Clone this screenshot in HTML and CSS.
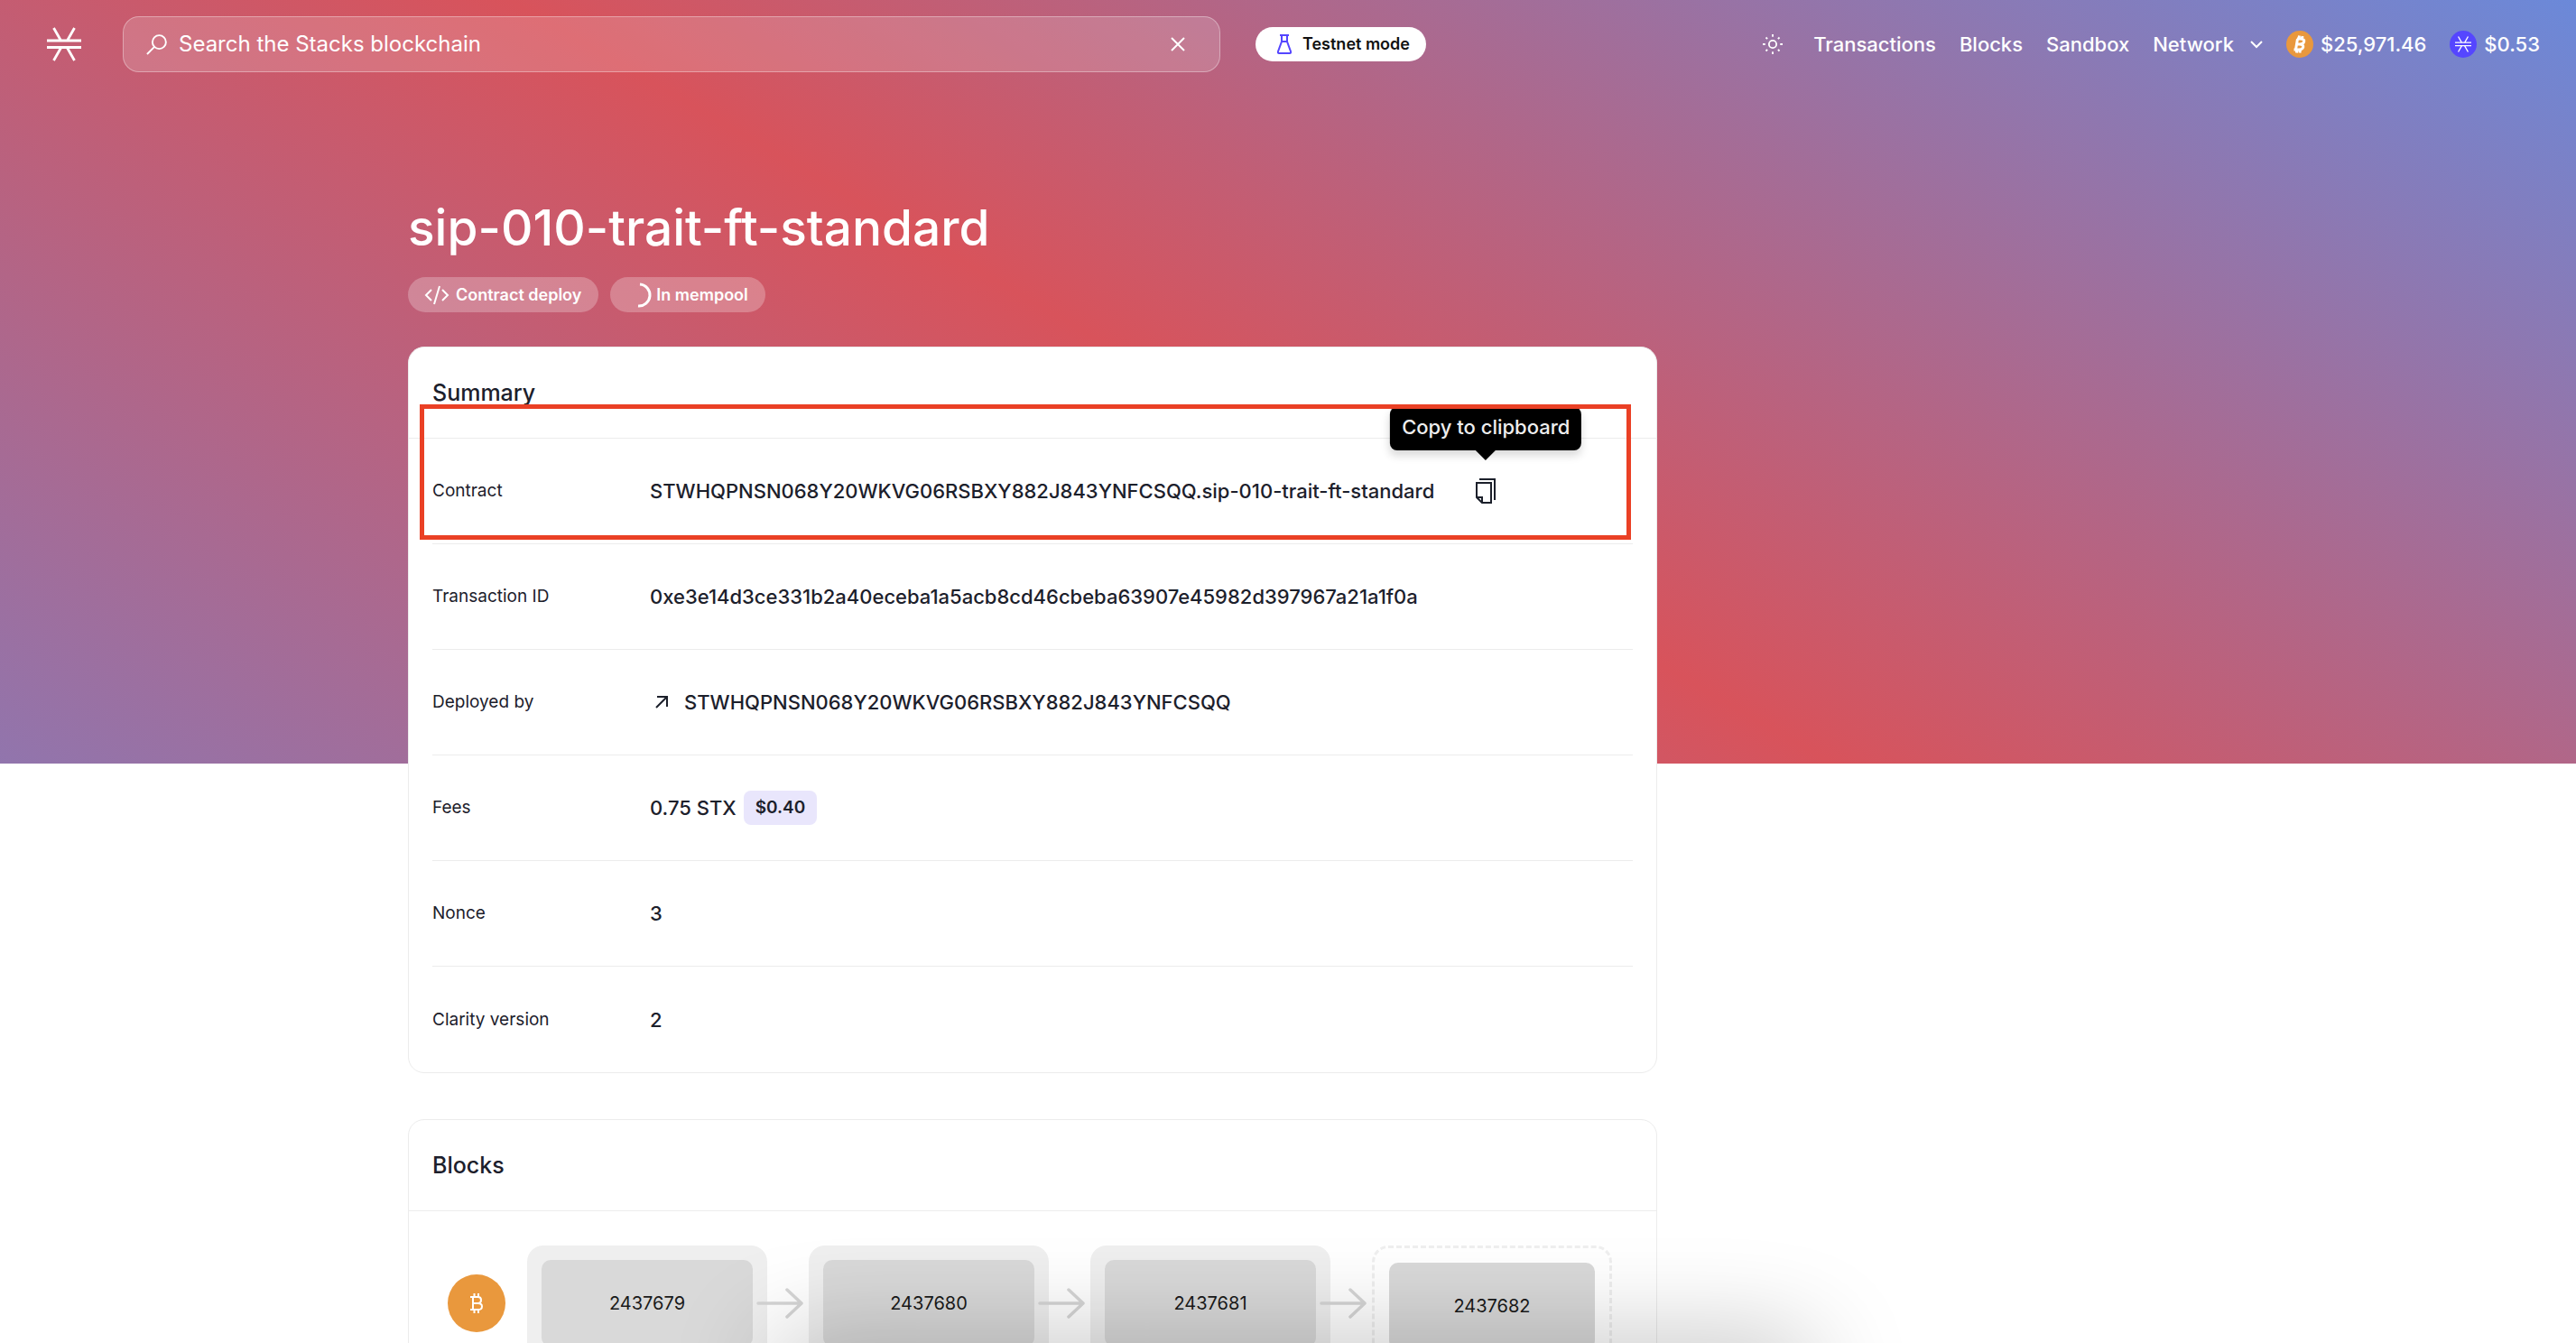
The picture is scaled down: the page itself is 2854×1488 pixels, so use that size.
FILE: index.html
```html
<!DOCTYPE html>
<html lang="en">
<head>
<meta charset="utf-8">
<title>sip-010-trait-ft-standard</title>
<link rel="stylesheet" href="styles.css">
</head>
<body>
<svg class="sprite" aria-hidden="true">
  <symbol id="stx" viewBox="0 0 38 38">
    <path d="M0 15h38M0 22.500h38M7.500 1l8 14M30.500 1l-8 14M7.500 37l8-14M30.500 37l-8-14" fill="none" stroke="currentColor" stroke-width="2.800"/>
  </symbol>
  <symbol id="arrow" viewBox="0 0 52 34">
    <path d="M2 17h47M34 2l16 15-16 15" fill="none" stroke="currentColor" stroke-width="3.500" stroke-linecap="round" stroke-linejoin="round"/>
  </symbol>
</svg>
<div class="hero">
  <header class="topbar">
    <a class="logo" href="#" aria-label="Home"><svg><use href="#stx"/></svg></a>
    <form class="search" role="search">
      <svg class="search-icon" viewBox="0 0 24 24"><circle cx="15" cy="9" r="7.8"/><path d="M9.5 14.5L1 23"/></svg>
      <input class="search-input" type="text" aria-label="Search" placeholder="Search the Stacks blockchain">
      <button class="clear" type="button" aria-label="Clear search"><svg viewBox="0 0 16 16"><path d="M1 1l14 14M15 1L1 15"/></svg></button>
    </form>
    <button class="mode" type="button">
      <svg viewBox="0 0 16 22"><path d="M3 1h10M5 1v7L1 19q-.4 2 1 2h12q1.400 0 1-2L11 8V1M5 8h6"/></svg>
      Testnet mode
    </button>
    <nav class="nav">
      <button class="theme" type="button" aria-label="Change theme"><svg viewBox="0 0 24 24"><circle cx="12" cy="12" r="4.500"/><path d="M12 0v3M12 21v3M0 12h3M21 12h3M3.800 3.800l1.800 1.800M18.400 18.400l1.800 1.800M3.800 20.200l1.800-1.800M18.400 5.600l1.800-1.800"/></svg></button>
      <a href="#">Transactions</a>
      <a href="#">Blocks</a>
      <a href="#">Sandbox</a>
      <a class="network" href="#">Network <svg viewBox="0 0 14 8"><path d="M1 1l6 6 6-6"/></svg></a>
      <span class="price"><span class="coin btc"><svg viewBox="0 0 16 20"><path d="M5 4h4q4.500 .4 3.700 3.200T8 10H5M8 10q4.500 .6 3.700 3.400T6 16H1.500M5.500 4L3.500 16M7.500 0.500l-.6 3.500M11 1l-.6 3.500M5 16l-.6 3.500M8.500 16l-.6 3.500"/></svg></span>$25,971.46</span>
      <span class="price"><span class="coin stx"><svg><use href="#stx"/></svg></span>$0.53</span>
    </nav>
  </header>
</div>
<main class="content">
  <div class="column">
    <h1>sip-010-trait-ft-standard</h1>
    <div class="tags">
      <span class="tag"><svg class="code" viewBox="0 0 26 22"><path d="M7 5l-6 6 6 6M19 5l6 6-6 6M16 1l-6 20"/></svg>Contract deploy</span>
      <span class="tag pending"><svg class="spinner" viewBox="0 0 26 26"><path d="M14 1a12 12 0 0 1-2 24"/></svg>In mempool</span>
    </div>
    <section class="card">
      <h2>Summary</h2>
      <dl class="rows">
        <div class="row marked"><dt>Contract</dt><dd>STWHQPNSN068Y20WKVG06RSBXY882J843YNFCSQQ.sip-010-trait-ft-standard
          <button class="copy" type="button" aria-label="Copy to clipboard"><svg viewBox="0 0 22 28"><path d="M4 1h17v23M1 5h16v22H7l-6-6zM1 21h6v6"/></svg><span class="tooltip">Copy to clipboard</span></button></dd></div>
        <div class="row"><dt>Transaction ID</dt><dd>0xe3e14d3ce331b2a40eceba1a5acb8cd46cbeba63907e45982d397967a21a1f0a</dd></div>
        <div class="row"><dt>Deployed by</dt><dd><svg class="out" viewBox="0 0 14 14"><path d="M1 13L13 1M2 1h11v11"/></svg><a href="#">STWHQPNSN068Y20WKVG06RSBXY882J843YNFCSQQ</a></dd></div>
        <div class="row"><dt>Fees</dt><dd>0.75 STX <span class="usd">$0.40</span></dd></div>
        <div class="row"><dt>Nonce</dt><dd>3</dd></div>
        <div class="row"><dt>Clarity version</dt><dd>2</dd></div>
      </dl>
    </section>
    <section class="card">
      <h2>Blocks</h2>
      <div class="chain">
        <span class="btc-big"><svg viewBox="0 0 14 22"><path d="M0 4h8.500q3.500 0 3.500 3.400T8.500 11H3M8.500 11q4.500 0 4.500 3.600T8.500 18H0M3 4v14M4.500 0v4M9 0v4M4.500 18v4M9 18v4"/></svg></span>
        <div class="blocks">
          <div class="block"><span>2437679</span></div>
          <svg class="arrow"><use href="#arrow"/></svg>
          <div class="block"><span>2437680</span></div>
          <svg class="arrow"><use href="#arrow"/></svg>
          <div class="block"><span>2437681</span></div>
          <svg class="arrow"><use href="#arrow"/></svg>
          <div class="block next"><span>2437682</span></div>
        </div>
      </div>
    </section>
  </div>
</main>
<div class="shade"></div>
</body>
</html>
```
FILE: styles.css
```css
* { box-sizing: border-box; }
html { height: 100%; }
body {
  margin: 0;
  height: 100%;
  overflow: hidden;
  position: relative;
  background: #fff;
  color: #1c202b;
  font: 500 22px/32px Inter, "Liberation Sans", sans-serif;
}
svg { display: block; fill: none; stroke: currentColor; stroke-width: 2; overflow: visible; }
button { border: 0; padding: 0; background: none; color: inherit; font: inherit; }
a { color: inherit; text-decoration: none; }
.sprite { position: absolute; width: 0; height: 0; }

.hero {
  height: 846px;
  margin-bottom: -646px;
  background: linear-gradient(30deg, #9175ad 0%, #d8535b 47%, #6b89d9 100%);
  color: #fff;
}
.topbar { display: flex; align-items: center; height: 98px; padding: 0 40px 0 52px; }
.logo { width: 38px; height: 38px; margin-right: 46px; }
.logo svg { width: 38px; height: 38px; }
.search {
  display: flex;
  align-items: center;
  flex: 1 1 auto;
  max-width: 1216px;
  height: 62px;
  padding: 0 38px 0 25px;
  border: 1px solid rgba(255, 255, 255, .35);
  border-radius: 18px;
  background: rgba(255, 255, 255, .16);
}
.search-icon { width: 23px; height: 23px; }
.search-input {
  flex: 1;
  margin: 0 0 0 13px;
  padding: 0;
  border: 0;
  background: none;
  color: #fff;
  font: 400 24px/32px Inter, sans-serif;
  outline: 0;
}
.search-input::placeholder { color: #fff; opacity: 1; }
.clear svg { width: 16px; height: 16px; }
.mode {
  display: flex;
  align-items: center;
  gap: 12px;
  height: 38px;
  margin-left: 39px;
  padding: 0 18px 0 24px;
  border-radius: 19px;
  background: #fff;
  color: #111;
  font-weight: 600;
  font-size: 18px;
}
.mode svg { width: 16px; height: 22px; color: #5546ff; }
.nav { display: flex; align-items: center; gap: 26px; margin-left: auto; font-size: 22px; }
.theme { margin-right: 8px; }
.theme svg { width: 22px; height: 22px; }
.network { display: flex; align-items: center; gap: 18px; }
.network svg { width: 14px; height: 8px; }
.price { display: flex; align-items: center; gap: 8px; }
.coin { display: grid; place-items: center; width: 30px; height: 30px; border-radius: 50%; }
.btc { background: #e9983d; }
.btc svg { width: 16px; height: 20px; stroke-width: 3; }
.stx { background: #5546ff; }
.stx svg { width: 18px; height: 18px; stroke-width: 4; }

.content {
  display: grid;
  grid-template-columns: minmax(0, 1384fr) 566fr;
  max-width: 1950px;
  margin: 0 auto;
}
h1 { margin: 0; color: #fff; font-weight: 500; font-size: 55px; line-height: 104px; }
.tags { display: flex; gap: 13px; margin: 3px 0 38px; }
.tag {
  display: flex;
  align-items: center;
  gap: 8px;
  height: 39px;
  padding: 0 19px;
  border-radius: 20px;
  background: rgba(255, 255, 255, .25);
  color: #fff;
  font-weight: 600;
  font-size: 18px;
}
.code { width: 26px; height: 22px; }
.pending { gap: 6px; }
.spinner { width: 26px; height: 26px; stroke-width: 3; }

.card { border: 1px solid #ececec; border-radius: 18px; background: #fff; }
.card + .card { margin-top: 51px; }
h2 { margin: 0; padding: 34px 26px; border-bottom: 1px solid #ececec; font-weight: 500; font-size: 25px; line-height: 32px; }
.rows { margin: 0; padding: 0 26px; }
.row { display: flex; align-items: center; height: 117px; border-bottom: 1px solid #ececec; position: relative; }
.row:last-child { border-bottom: 0; }
dt { width: 241px; font-weight: 400; font-size: 19px; }
dd { display: flex; align-items: center; margin: 0; }
.marked::after {
  content: "";
  position: absolute;
  inset: -38px 2px 4px -14px;
  border: 5px solid #ea4025;
}
.copy { position: relative; margin-left: 46px; }
.copy svg { width: 22px; height: 28px; }
.tooltip {
  position: absolute;
  bottom: 59px;
  left: 50%;
  transform: translateX(-50%);
  padding: 6px 13px 10px;
  border-radius: 8px;
  background: #000;
  color: #eee;
  white-space: nowrap;
  box-shadow: 0 6px 10px rgba(0, 0, 0, .15);
}
.tooltip::after {
  content: "";
  position: absolute;
  top: 100%;
  left: 50%;
  margin-left: -11px;
  border: 11px solid transparent;
  border-top-color: #000;
  border-bottom: 0;
}
.out { width: 14px; height: 14px; margin: 0 18px 0 6px; }
.usd { margin-left: 8px; padding: 3px 13px; border-radius: 8px; background: #e9e6fc; font-weight: 600; font-size: 19px; }

.chain { display: flex; padding: 38px 43px; }
.btc-big { display: grid; place-items: center; width: 64px; height: 64px; margin: 32px 24px 0 0; border-radius: 50%; background: #e9983d; color: #fff; }
.btc-big svg { width: 14px; height: 22px; }
.blocks { display: flex; flex: 1; }
.block { flex: none; width: 266px; height: 126px; padding: 16px; border-radius: 18px; background: #efefef; }
.block span { display: grid; place-items: center; height: 96px; border-radius: 10px; background: #d9d9d9; color: #1a1a1a; font-weight: 400; font-size: 20px; }
.next { border: 3px dashed #efefef; background: none; }
.arrow { flex: none; width: 52px; height: 34px; margin: 47px 6px 0 -12px; color: #d6d6d6; }

/* soft shadow of the panel that rests below the fold */
.shade {
  position: absolute;
  left: 860px;
  right: 854px;
  bottom: -60px;
  height: 50px;
  border-radius: 30px;
  box-shadow: 0 0 110px 12px rgba(0, 0, 0, .28);
}
```
